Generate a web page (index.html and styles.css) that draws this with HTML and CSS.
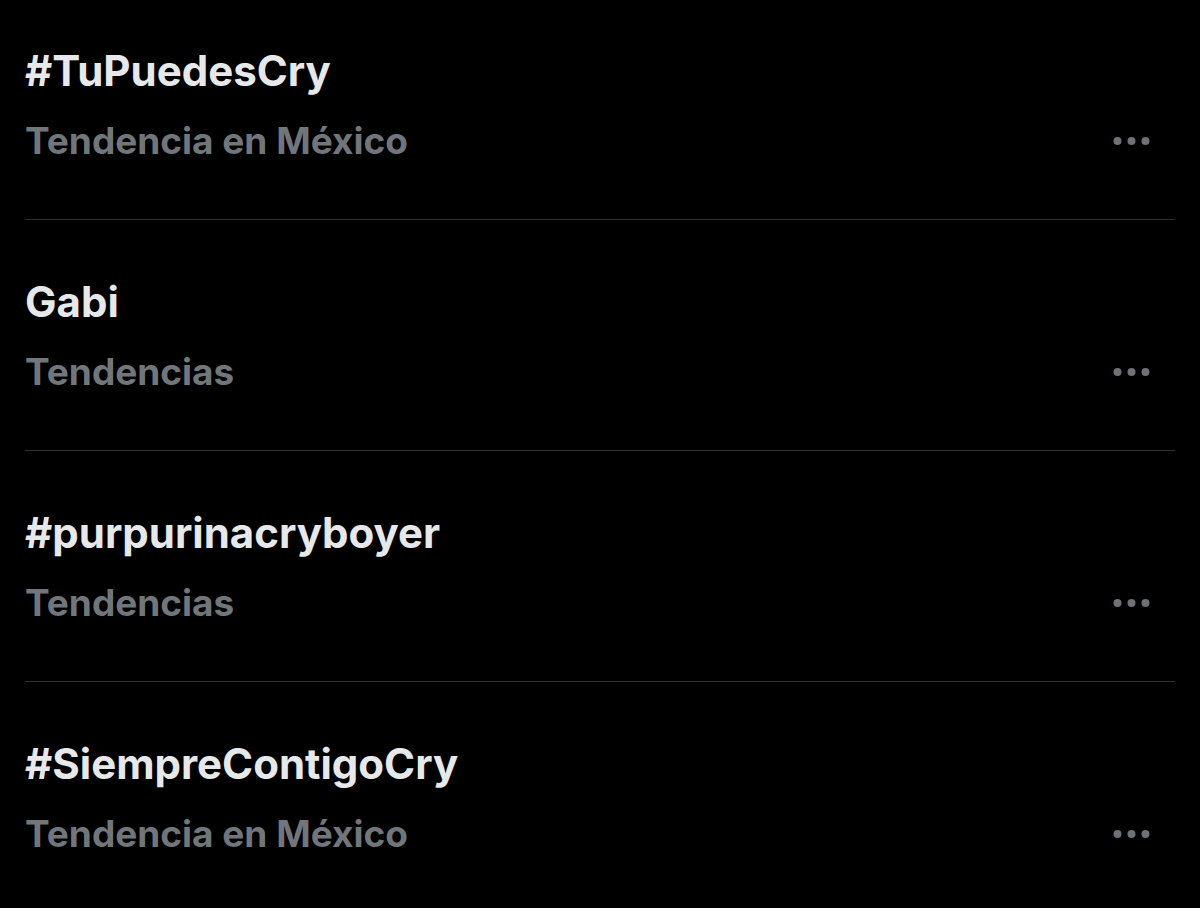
FILE: index.html
```html
<!DOCTYPE html>
<html lang="es">
<head>
  <meta charset="UTF-8" />
  <meta name="viewport" content="width=device-width, initial-scale=1.0"/>
  <title>Tendencias</title>
  <link rel="stylesheet" href="styles.css">
</head>
<body>
  <div class="trends">
    <div class="trend">
      <div class="trend-text">
        <div class="trend-name">#TuPuedesCry</div>
        <div class="trend-meta">Tendencia en México</div>
      </div>
      <svg class="more" viewBox="0 0 36 8"><circle cx="4" cy="4" r="4"/><circle cx="18" cy="4" r="4"/><circle cx="32" cy="4" r="4"/></svg>
    </div>

    <div class="trend">
      <div class="trend-text">
        <div class="trend-name">Gabi</div>
        <div class="trend-meta">Tendencias</div>
      </div>
      <svg class="more" viewBox="0 0 36 8"><circle cx="4" cy="4" r="4"/><circle cx="18" cy="4" r="4"/><circle cx="32" cy="4" r="4"/></svg>
    </div>

    <div class="trend">
      <div class="trend-text">
        <div class="trend-name">#purpurinacryboyer</div>
        <div class="trend-meta">Tendencias</div>
      </div>
      <svg class="more" viewBox="0 0 36 8"><circle cx="4" cy="4" r="4"/><circle cx="18" cy="4" r="4"/><circle cx="32" cy="4" r="4"/></svg>
    </div>

    <div class="trend">
      <div class="trend-text">
        <div class="trend-name">#SiempreContigoCry</div>
        <div class="trend-meta">Tendencia en México</div>
      </div>
      <svg class="more" viewBox="0 0 36 8"><circle cx="4" cy="4" r="4"/><circle cx="18" cy="4" r="4"/><circle cx="32" cy="4" r="4"/></svg>
    </div>
  </div>
</body>
</html>
```

FILE: styles.css
```css
body {
  margin: 0;
  background: #000;
  font-family: Inter, 'Liberation Sans', sans-serif;
  overflow: hidden;
}

.trends {
  margin: 0 25px;
}

.trend {
  display: flex;
  align-items: flex-end;
  justify-content: space-between;
  padding: 61px 0 55px 0;
  border-bottom: 1px solid #2f3336;
}

.trend:first-child {
  padding-top: 50px;
}

.trend-name {
  font-size: 42px;
  line-height: 42px;
  font-weight: 700;
  color: #e7e8e9;
  margin-bottom: 26px;
}

.trend-meta {
  font-size: 37px;
  line-height: 46px;
  font-weight: 700;
  color: #71767b;
}

.more {
  width: 37px;
  height: 8px;
  fill: #6e7175;
  margin: 0 25px 19px 0;
}
```
